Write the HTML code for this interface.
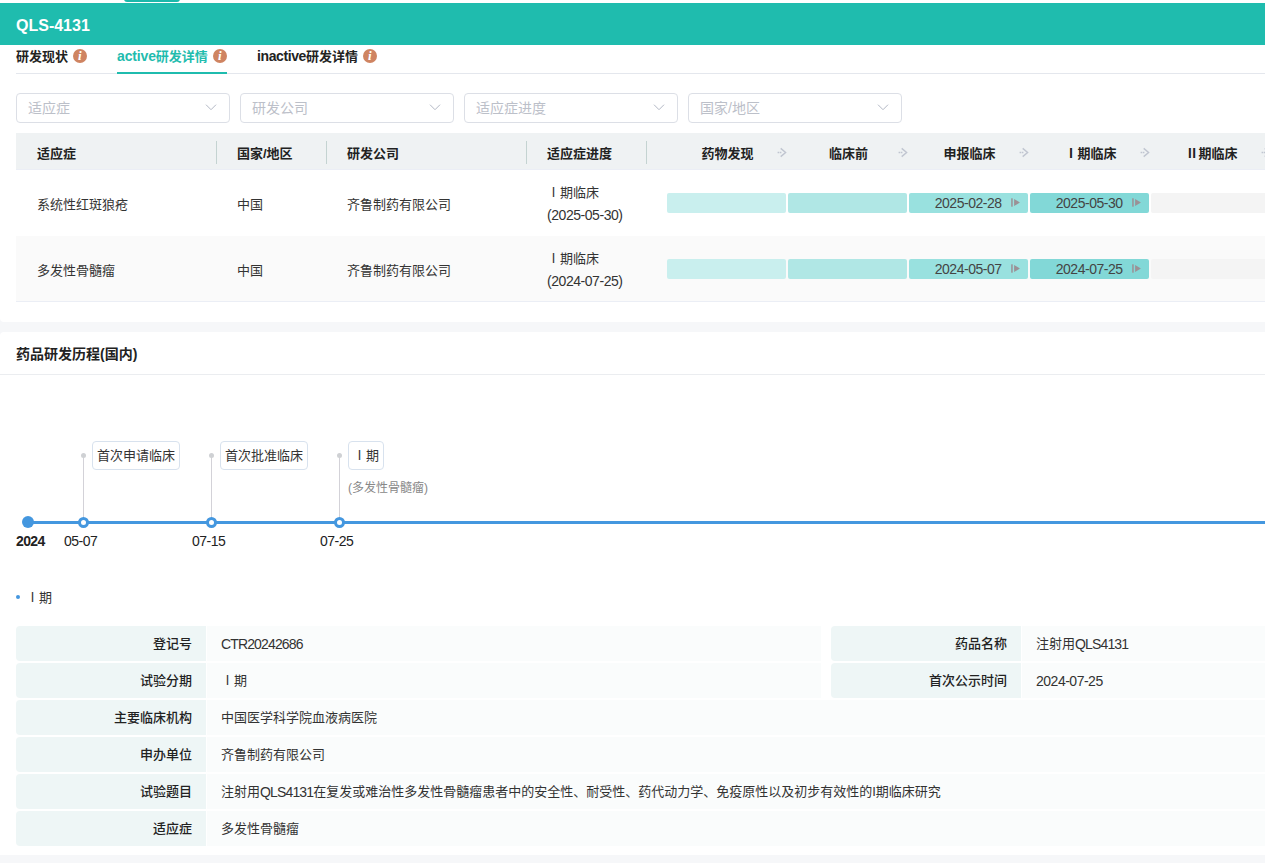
<!DOCTYPE html>
<html lang="zh-CN">
<head>
<meta charset="utf-8">
<title>QLS-4131</title>
<style>
*{box-sizing:border-box;margin:0;padding:0}
html,body{width:1265px;height:863px;overflow:hidden;background:#fff}
body{font-family:"Liberation Sans","Noto Sans CJK SC",sans-serif;font-size:13px;color:#333;position:relative}
.abs{position:absolute}
.t{position:absolute;white-space:nowrap;line-height:20px;margin-top:1px}
.b{font-weight:bold}
.n,.n2,.n3{line-height:0}
.n{font-size:14px;letter-spacing:-.49px}
.n2{font-size:14px;letter-spacing:-.86px}
.n3{font-size:14px;letter-spacing:-.15px}
.val .n,.val .n2{position:relative;top:1px}
/* header */
#toptab{left:124px;top:-2px;width:56px;height:4px;background:#1bb8aa;border-radius:0 0 3px 3px}
#hdr{left:0;top:3px;width:1265px;height:42px;background:#1fbcae}
#hdr .t{left:16px;top:11px;font-size:16px;font-weight:bold;color:#fff;line-height:22px}
/* tabs */
#tabline{left:16px;top:73px;width:1249px;height:1px;background:#e4e7ed}
#tabact{left:117px;top:72px;width:110px;height:2px;background:#1fbcae}
.tab{top:45.5px;font-weight:bold;color:#222;line-height:20px}
.info{position:absolute;width:14px;height:14px;border-radius:50%;background:#cf8461;color:#fff;font-family:"Liberation Serif",serif;font-style:italic;font-weight:bold;font-size:13px;line-height:14px;text-align:center;text-indent:-.4px}
/* selects */
.sel{position:absolute;top:93px;width:214px;height:30px;border:1px solid #dcdfe6;border-radius:4px;background:#fff}
.sel span{position:absolute;left:11px;top:4px;line-height:20px;font-size:14px;color:#bcc0c9}
.sel svg{position:absolute;right:12px;top:8px}
/* table */
#thead{left:16px;top:133px;width:1249px;height:37px;background:#eff2f3;border-bottom:1px solid #ebeef5}
.th{top:143px;font-weight:bold;color:#222;line-height:20px}
.vsep{position:absolute;top:141px;width:1px;height:23px;background:#c4d3d1}
#row2{left:16px;top:236px;width:1249px;height:65px;background:#fafafa}
#rowline{left:16px;top:301px;width:1249px;height:1px;background:#ebeef5}
.td{color:#333;line-height:20px}
.bar{position:absolute;height:20px;border-radius:2px}
.bar .d{position:absolute;top:0;left:0;right:26.5px;text-align:right;line-height:20px;font-size:14px;color:#444;white-space:nowrap}
.bar svg{position:absolute;right:8px;top:5px}
/* gray bands */
#band1{left:0;top:316px;width:1265px;height:22px;background:#f6f7f9}
#p1{left:0;top:310px;width:1265px;height:12px;background:#fff;border-radius:0 0 0 4px}
#p2{left:0;top:332px;width:1265px;height:12px;background:#fff;border-radius:4px 0 0 0}
#band2{left:0;top:855px;width:1265px;height:8px;background:#f6f7f9}
#secline{left:0;top:374px;width:1265px;height:1px;background:#ebedf0}
/* timeline */
#tl{left:28px;top:521px;width:1237px;height:3px;background:#4497df}
.node{position:absolute;top:517px;width:11px;height:11px;border-radius:50%;border:3px solid #4497df;background:#fff}
.stem{position:absolute;top:457px;width:1px;height:61px;background:#d3d2d8}
.sdot{position:absolute;top:453px;width:5px;height:5px;border-radius:50%;background:#cfd1d4}
.tag{position:absolute;top:441px;height:29px;border:1px solid #d8e2ee;border-radius:4px;background:#fff;line-height:26px;padding:1px 4px 0;font-size:13px;color:#333;white-space:nowrap}
.dt{top:531px;color:#222;line-height:20px}
/* detail */
.lab{position:absolute;height:35px;background:#eef6f6;text-align:right;font-weight:500;color:#222;line-height:35px;padding-right:14px;white-space:nowrap}
.val{position:absolute;height:35px;background:#fafcfc;line-height:35px;padding-left:14px;color:#333;white-space:nowrap}
</style>
</head>
<body>
<div class="abs" id="toptab"></div>
<div class="abs" id="hdr"><div class="t">QLS-4131</div></div>

<div class="abs" id="tabline"></div>
<div class="abs" id="tabact"></div>
<div class="t tab" style="left:16px">研发现状</div>
<div class="info" style="left:73px;top:49px">i</div>
<div class="t tab" style="left:117px;color:#1fbcae"><span class="n3">active</span>研发详情</div>
<div class="info" style="left:213px;top:49px">i</div>
<div class="t tab" style="left:257px"><span class="n3" style="letter-spacing:-.4px">inactive</span>研发详情</div>
<div class="info" style="left:363px;top:49px">i</div>

<div class="sel" style="left:16px"><span>适应症</span><svg width="12" height="12" viewBox="0 0 12 12"><path d="M1 2.7 L6 7.7 L11 2.7" fill="none" stroke="#b3b8c5" stroke-width="1"/></svg></div>
<div class="sel" style="left:240px"><span>研发公司</span><svg width="12" height="12" viewBox="0 0 12 12"><path d="M1 2.7 L6 7.7 L11 2.7" fill="none" stroke="#b3b8c5" stroke-width="1"/></svg></div>
<div class="sel" style="left:464px"><span>适应症进度</span><svg width="12" height="12" viewBox="0 0 12 12"><path d="M1 2.7 L6 7.7 L11 2.7" fill="none" stroke="#b3b8c5" stroke-width="1"/></svg></div>
<div class="sel" style="left:688px"><span>国家/地区</span><svg width="12" height="12" viewBox="0 0 12 12"><path d="M1 2.7 L6 7.7 L11 2.7" fill="none" stroke="#b3b8c5" stroke-width="1"/></svg></div>

<div class="abs" id="thead"></div>
<div class="abs" id="row2"></div>
<div class="abs" id="rowline"></div>
<div class="t th" style="left:37px">适应症</div>
<div class="t th" style="left:237px">国家/地区</div>
<div class="t th" style="left:347px">研发公司</div>
<div class="t th" style="left:547px">适应症进度</div>
<div class="vsep" style="left:216px"></div>
<div class="vsep" style="left:326px"></div>
<div class="vsep" style="left:526px"></div>
<div class="vsep" style="left:646px"></div>
<div class="t th" style="left:667px;width:121px;text-align:center">药物发现</div>
<svg class="abs" style="left:777px;top:147px" width="10" height="11" viewBox="0 0 10 11"><path d="M3.7 1.4 L8.6 5.5 L3.7 9.6" fill="none" stroke="#c0c5d0" stroke-width="1.4"/><path d="M0.6 5.5 H5" fill="none" stroke="#c0c5d0" stroke-width="1.3" stroke-dasharray="1.5 0.6"/></svg>
<div class="t th" style="left:788px;width:121px;text-align:center">临床前</div>
<svg class="abs" style="left:898px;top:147px" width="10" height="11" viewBox="0 0 10 11"><path d="M3.7 1.4 L8.6 5.5 L3.7 9.6" fill="none" stroke="#c0c5d0" stroke-width="1.4"/><path d="M0.6 5.5 H5" fill="none" stroke="#c0c5d0" stroke-width="1.3" stroke-dasharray="1.5 0.6"/></svg>
<div class="t th" style="left:909px;width:121px;text-align:center">申报临床</div>
<svg class="abs" style="left:1019px;top:147px" width="10" height="11" viewBox="0 0 10 11"><path d="M3.7 1.4 L8.6 5.5 L3.7 9.6" fill="none" stroke="#c0c5d0" stroke-width="1.4"/><path d="M0.6 5.5 H5" fill="none" stroke="#c0c5d0" stroke-width="1.3" stroke-dasharray="1.5 0.6"/></svg>
<div class="t th" style="left:1030px;width:121px;text-align:center">Ⅰ期临床</div>
<svg class="abs" style="left:1140px;top:147px" width="10" height="11" viewBox="0 0 10 11"><path d="M3.7 1.4 L8.6 5.5 L3.7 9.6" fill="none" stroke="#c0c5d0" stroke-width="1.4"/><path d="M0.6 5.5 H5" fill="none" stroke="#c0c5d0" stroke-width="1.3" stroke-dasharray="1.5 0.6"/></svg>
<div class="t th" style="left:1151px;width:121px;text-align:center">Ⅱ期临床</div>
<svg class="abs" style="left:1261px;top:147px" width="10" height="11" viewBox="0 0 10 11"><path d="M3.7 1.4 L8.6 5.5 L3.7 9.6" fill="none" stroke="#c0c5d0" stroke-width="1.4"/><path d="M0.6 5.5 H5" fill="none" stroke="#c0c5d0" stroke-width="1.3" stroke-dasharray="1.5 0.6"/></svg>
<div class="t td" style="left:37px;top:192px;line-height:23px">系统性红斑狼疮</div>
<div class="t td" style="left:237px;top:192px;line-height:23px">中国</div>
<div class="t td" style="left:347px;top:192px;line-height:23px">齐鲁制药有限公司</div>
<div class="t td" style="left:547px;top:180px;line-height:23px">Ⅰ期临床<br><span class="n" style="letter-spacing:-.45px">(2025-05-30)</span></div>
<div class="bar" style="left:667px;top:193px;width:119px;background:#c9efee;border-radius:2px"></div>
<div class="bar" style="left:788px;top:193px;width:119px;background:#b0e7e5;border-radius:2px"></div>
<div class="bar" style="left:909px;top:193px;width:119px;background:#99e1df;border-radius:2px"><span class="d n">2025-02-28</span><svg width="9" height="9" viewBox="0 0 9 9"><rect x="0.2" y="0.3" width="1.5" height="8.4" fill="#9b9196"/><path d="M3.1 0.9 L8.9 4.5 L3.1 8.1 Z" fill="#9b9196"/></svg></div>
<div class="bar" style="left:1030px;top:193px;width:119px;background:#82d8d7;border-radius:2px"><span class="d n">2025-05-30</span><svg width="9" height="9" viewBox="0 0 9 9"><rect x="0.2" y="0.3" width="1.5" height="8.4" fill="#9b9196"/><path d="M3.1 0.9 L8.9 4.5 L3.1 8.1 Z" fill="#9b9196"/></svg></div>
<div class="bar" style="left:1151px;top:193px;width:114px;background:#f4f4f4;border-radius:2px 0 0 2px"></div>
<div class="t td" style="left:37px;top:258px;line-height:23px">多发性骨髓瘤</div>
<div class="t td" style="left:237px;top:258px;line-height:23px">中国</div>
<div class="t td" style="left:347px;top:258px;line-height:23px">齐鲁制药有限公司</div>
<div class="t td" style="left:547px;top:246px;line-height:23px">Ⅰ期临床<br><span class="n" style="letter-spacing:-.45px">(2024-07-25)</span></div>
<div class="bar" style="left:667px;top:259px;width:119px;background:#c9efee;border-radius:2px"></div>
<div class="bar" style="left:788px;top:259px;width:119px;background:#b0e7e5;border-radius:2px"></div>
<div class="bar" style="left:909px;top:259px;width:119px;background:#99e1df;border-radius:2px"><span class="d n">2024-05-07</span><svg width="9" height="9" viewBox="0 0 9 9"><rect x="0.2" y="0.3" width="1.5" height="8.4" fill="#9b9196"/><path d="M3.1 0.9 L8.9 4.5 L3.1 8.1 Z" fill="#9b9196"/></svg></div>
<div class="bar" style="left:1030px;top:259px;width:119px;background:#82d8d7;border-radius:2px"><span class="d n">2024-07-25</span><svg width="9" height="9" viewBox="0 0 9 9"><rect x="0.2" y="0.3" width="1.5" height="8.4" fill="#9b9196"/><path d="M3.1 0.9 L8.9 4.5 L3.1 8.1 Z" fill="#9b9196"/></svg></div>
<div class="bar" style="left:1151px;top:259px;width:114px;background:#f4f4f4;border-radius:2px 0 0 2px"></div>

<div class="abs" id="band1"></div><div class="abs" id="p1"></div><div class="abs" id="p2"></div>
<div class="abs" id="secline"></div>
<div class="t b" style="left:16px;top:342px;font-size:14px;line-height:22px;color:#222">药品研发历程(国内)</div>
<div class="abs" id="tl"></div>
<div class="abs" style="left:22px;top:516px;width:12px;height:12px;border-radius:50%;background:#4497df"></div>
<div class="t dt b" style="left:16px"><span class="n3" style="letter-spacing:-.65px">2024</span></div>
<div class="stem" style="left:83px"></div>
<div class="sdot" style="left:81px"></div>
<div class="node" style="left:78px"></div>
<div class="tag" style="left:92px;width:88px">首次申请临床</div>
<div class="t dt" style="left:64px"><span class="n">05-07</span></div>
<div class="stem" style="left:211px"></div>
<div class="sdot" style="left:209px"></div>
<div class="node" style="left:206px"></div>
<div class="tag" style="left:220px;width:88px">首次批准临床</div>
<div class="t dt" style="left:192px"><span class="n">07-15</span></div>
<div class="stem" style="left:339px"></div>
<div class="sdot" style="left:337px"></div>
<div class="node" style="left:334px"></div>
<div class="tag" style="left:348px;width:36px">Ⅰ期</div>
<div class="t dt" style="left:320px"><span class="n">07-25</span></div>
<div class="t" style="left:348px;top:477px;font-size:12px;color:#888;line-height:20px">(多发性骨髓瘤)</div>
<div class="abs" style="left:16px;top:595px;width:4px;height:4px;border-radius:50%;background:#4497df"></div>
<div class="t" style="left:26px;top:586.5px;color:#333">Ⅰ期</div>
<div class="lab" style="left:16px;top:626px;width:190px;border-radius:4px 0 0 4px">登记号</div>
<div class="val" style="left:207px;top:626px;width:614px"><span class="n2">CTR20242686</span></div>
<div class="lab" style="left:831px;top:626px;width:190px;border-radius:4px 0 0 4px">药品名称</div>
<div class="val" style="left:1022px;top:626px;width:243px">注射用<span class="n2">QLS4131</span></div>
<div class="lab" style="left:16px;top:663px;width:190px;border-radius:4px 0 0 4px">试验分期</div>
<div class="val" style="left:207px;top:663px;width:614px">Ⅰ期</div>
<div class="lab" style="left:831px;top:663px;width:190px;border-radius:4px 0 0 4px">首次公示时间</div>
<div class="val" style="left:1022px;top:663px;width:243px"><span class="n">2024-07-25</span></div>
<div class="lab" style="left:16px;top:700px;width:190px;border-radius:4px 0 0 4px">主要临床机构</div>
<div class="val" style="left:207px;top:700px;width:1058px">中国医学科学院血液病医院</div>
<div class="lab" style="left:16px;top:737px;width:190px;border-radius:4px 0 0 4px">申办单位</div>
<div class="val" style="left:207px;top:737px;width:1058px">齐鲁制药有限公司</div>
<div class="lab" style="left:16px;top:774px;width:190px;border-radius:4px 0 0 4px">试验题目</div>
<div class="val" style="left:207px;top:774px;width:1058px">注射用<span class="n2">QLS4131</span>在复发或难治性多发性骨髓瘤患者中的安全性、耐受性、药代动力学、免疫原性以及初步有效性的I期临床研究</div>
<div class="lab" style="left:16px;top:811px;width:190px;border-radius:4px 0 0 4px">适应症</div>
<div class="val" style="left:207px;top:811px;width:1058px">多发性骨髓瘤</div>
<div class="abs" id="band2"></div>
</body>
</html>
